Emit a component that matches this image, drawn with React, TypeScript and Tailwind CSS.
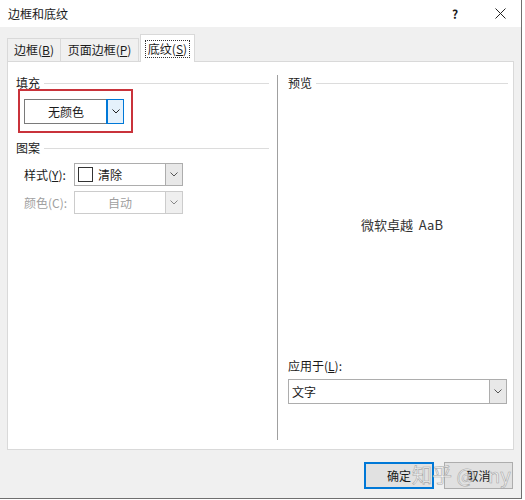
import React from "react";

function Chevron({ color = "#333" }: { color?: string }) {
  return (
    <svg width="8" height="5" viewBox="0 0 8 5" fill="none">
      <polyline points="0.5,0.5 4,4 7.5,0.5" stroke={color} strokeWidth="1" />
    </svg>
  );
}

function Header({ text }: { text: string }) {
  return (
    <div className="flex h-[14px] items-center gap-[4px]">
      <span className="leading-[14px]">{text}</span>
      <div className="h-px flex-1 bg-[#dcdcdc]" />
    </div>
  );
}

export default function App() {
  return (
    <div className="relative h-[499px] w-[522px] border-b border-r border-[#6f6f6f] bg-[#f0f0f0] font-['Microsoft_YaHei','Noto_Sans_CJK_SC',sans-serif] text-[12px] text-[#1a1a1a]">
      {/* title bar */}
      <div className="flex h-[27px] items-center bg-white pl-[8px]">
        <span className="flex-1 leading-none">边框和底纹</span>
        <span className="w-[10px] text-[12px] font-bold leading-none">?</span>
        <span className="ml-[32px] mr-[15px] flex h-[14px] w-[12px] items-center justify-center">
          <svg width="11" height="11" viewBox="0 0 11 11">
            <line x1="0.5" y1="0.5" x2="10.5" y2="10.5" stroke="#222" strokeWidth="1" />
            <line x1="10.5" y1="0.5" x2="0.5" y2="10.5" stroke="#222" strokeWidth="1" />
          </svg>
        </span>
      </div>

      <div className="px-[7px]">
        {/* tabs */}
        <div className="relative z-10 mt-[7px] flex h-[27px] items-end">
          <div className="flex h-[23px] w-[54px] items-center justify-center border border-b-0 border-[#d9d9d9] bg-[#f0f0f0]">
            边框(<span className="underline">B</span>)
          </div>
          <div className="flex h-[23px] w-[78px] items-center justify-center border border-b-0 border-l-0 border-[#d9d9d9] bg-[#f0f0f0]">
            页面边框(<span className="underline">P</span>)
          </div>
          <div className="-mb-px ml-[1px] flex h-[28px] w-[55px] items-center justify-center border border-b-0 border-[#d9d9d9] bg-white">
            <span className="border border-dotted border-[#333] px-[2px] leading-[16px]">
              底纹(<span className="underline">S</span>)
            </span>
          </div>
        </div>

        {/* panel */}
        <div className="flex h-[389px] w-[507px] border border-[#d9d9d9] bg-white">
          {/* left */}
          <div className="flex w-[269px] flex-col pl-[8px] pr-[8px] pt-[14px]">
            <Header text="填充" />
            <div className="ml-[2px] mt-[-1px] h-[44px] w-[115px] border-2 border-[#c9333b] pl-[4px] pt-[8px]">
              <div className="flex h-[25px] w-[100px] border border-[#7a7a7a] bg-white">
                <div className="flex flex-1 items-center justify-center">无颜色</div>
                <div className="flex w-[16px] items-center justify-center border-l border-[#0078d7] bg-[#e5f1fb] outline outline-1 outline-[#0078d7]">
                  <Chevron color="#222" />
                </div>
              </div>
            </div>
            <div className="mt-[8px]">
              <Header text="图案" />
            </div>
            <div className="ml-[8px] mt-[8px] flex h-[23px] items-center">
              <span className="w-[50px]">
                样式(<span className="underline">Y</span>):
              </span>
              <div className="flex h-[23px] w-[109px] border border-[#adadad] bg-white">
                <div className="flex flex-1 items-center pl-[3px]">
                  <span className="h-[15px] w-[15px] border border-[#333]" />
                  <span className="ml-[5px]">清除</span>
                </div>
                <div className="flex w-[17px] items-center justify-center border-l border-[#adadad] bg-[#e8e8e8]">
                  <Chevron color="#555" />
                </div>
              </div>
            </div>
            <div className="ml-[8px] mt-[5px] flex h-[23px] items-center text-[#a0a0a0]">
              <span className="w-[50px]">颜色(C):</span>
              <div className="flex h-[23px] w-[109px] border border-[#cccccc] bg-white">
                <div className="flex flex-1 items-center justify-center">自动</div>
                <div className="flex w-[17px] items-center justify-center border-l border-[#cccccc] bg-[#efefef]">
                  <Chevron color="#888" />
                </div>
              </div>
            </div>
          </div>

          {/* divider */}
          <div className="mb-[9px] mt-[13px] w-px bg-[#a0a0a0]" />

          {/* right */}
          <div className="flex flex-1 flex-col pb-[45px] pl-[10px] pr-[5px] pt-[14px]">
            <Header text="预览" />
            <div className="flex flex-1 items-center justify-center pl-[8px] text-[13px] text-[#333]">
              微软卓越&nbsp;&nbsp;AaB
            </div>
            <div className="flex h-[14px] items-center">
              应用于(<span className="underline">L</span>):
            </div>
            <div className="mt-[6px] flex h-[25px] w-[219px] border border-[#adadad] bg-white">
              <div className="flex flex-1 items-center pl-[3px]">文字</div>
              <div className="flex w-[17px] items-center justify-center border-l border-[#adadad] bg-[#e8e8e8]">
                <Chevron color="#555" />
              </div>
            </div>
          </div>
        </div>

        {/* buttons */}
        <div className="mt-[12px] flex justify-end gap-[10px] pr-[1px]">
          <div className="flex h-[27px] w-[70px] items-center justify-center border-2 border-[#0078d7] bg-[#e1e1e1]">
            确定
          </div>
          <div className="flex h-[27px] w-[69px] items-center justify-center border border-[#adadad] bg-[#e1e1e1]">
            取消
          </div>
        </div>
      </div>

      {/* watermark */}
      <div className="pointer-events-none absolute left-[412px] top-[463px] text-[20px] leading-[24px] text-white/70 [-webkit-text-stroke:0.6px_#a8a8a8]">
        知乎 @
      </div>
      <div className="pointer-events-none absolute left-[488px] top-[463px] text-[20px] leading-[24px] text-white/70 [-webkit-text-stroke:0.6px_#a8a8a8]">
        ny
      </div>
    </div>
  );
}
